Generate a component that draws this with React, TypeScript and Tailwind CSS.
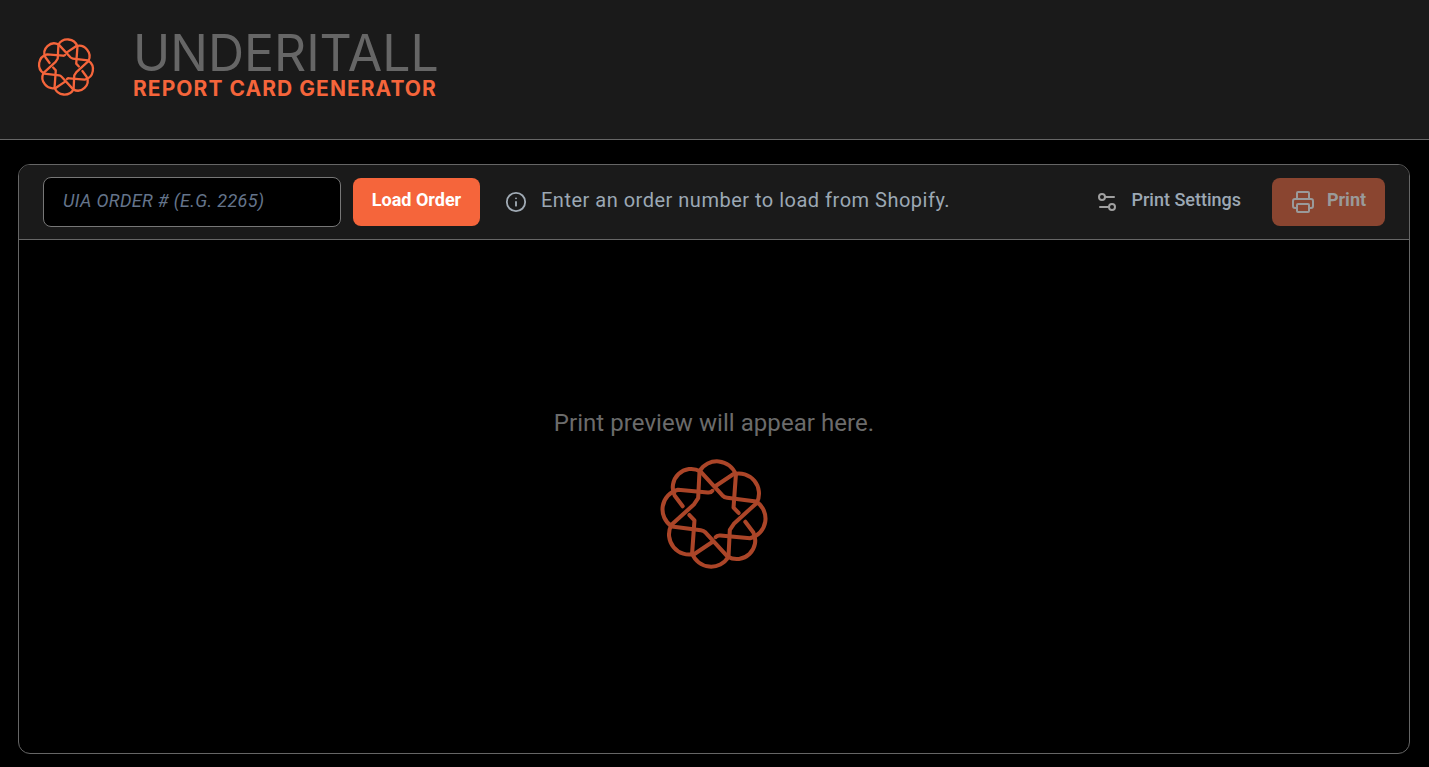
import React from 'react';
import { Info, Printer, Settings2 } from 'lucide-react';

const knotStrands = [
  'M100 170 L76 138 A55 55 0 0 1 152 66 L218 138 Q224 144 232 145 L318 156 A60 60 0 0 1 300 265 L212 257 Q202 256 198 262',
  'M198 110 L250 75 A60 60 0 0 1 320 160 L252 222 L240 240 L236 320 A60 60 0 0 1 128 310 L135 212 L120 196',
];

const KnotLogo = ({ className, strokeWidth }: { className: string; strokeWidth: number }) => (
  <svg viewBox="0 0 386 386" fill="none" className={className} stroke="currentColor" strokeWidth={strokeWidth} strokeLinecap="round" strokeLinejoin="round">
    {knotStrands.map((d, index) => (
      <g key={index}>
        <path d={d} />
        <path d={d} transform="rotate(180 193 193)" />
      </g>
    ))}
  </svg>
);

const App = () => {
  return (
    <div className="h-[767px] flex flex-col bg-black overflow-hidden font-['Roboto',sans-serif]">
      <header className="h-[140px] shrink-0 flex items-center bg-[#1a1a1a] border-b border-[#666] pl-[32px] pb-[7px]">
        <KnotLogo className="mt-[2px] w-[68px] h-[68px] text-[#f5653b]" strokeWidth={13} />
        <div className="ml-[33px] flex flex-col">
          <span className="font-['Inter',sans-serif] font-normal text-[50px] leading-[42px] mb-[4px] text-[#666] tracking-[0px]">UNDERITALL</span>
          <span className="font-['Inter',sans-serif] font-bold text-[21px] leading-[22px] text-[#f5653b] tracking-[1.05px]">REPORT CARD GENERATOR</span>
        </div>
      </header>

      <main className="flex-1 pl-[18px] pr-[19px] pt-6 pb-[13px] flex flex-col min-h-0">
        <div className="flex-1 flex flex-col border border-[#666] rounded-xl overflow-hidden">
          <div className="h-[75px] shrink-0 flex items-center bg-[#1a1a1a] border-b border-[#666] pl-6 pr-6">
            <input
              placeholder="UIA ORDER # (E.G. 2265)"
              className="w-[298px] h-[50px] bg-black border border-[#777] rounded-lg pl-[19px] pr-[19px] pb-1 text-[18px] tracking-[0.35px] italic placeholder:text-[#64748b] outline-none"
            />
            <button className="ml-3 w-[127px] h-[48px] pb-[5px] rounded-lg bg-[#f5653b] text-white font-bold text-[18px]">Load Order</button>
            <Info className="ml-[25px] w-[22px] h-[22px] text-[#a0aab4]" strokeWidth={2} />
            <span className="ml-[14px] mb-1 text-[#9ca8b4] text-[20px] tracking-[0.5px]">Enter an order number to load from Shopify.</span>
            <button className="ml-auto flex items-center text-[#9ca8b4] font-medium text-[18px]">
              <Settings2 className="w-6 h-6 text-[#a0a0a0]" strokeWidth={2} />
              <span className="ml-3 mb-[5px]">Print Settings</span>
            </button>
            <button className="ml-[31px] w-[113px] h-[48px] rounded-lg bg-[#8a4530] flex items-center justify-center text-[#9a9a9a] font-bold text-[18px]">
              <Printer className="w-6 h-6" strokeWidth={2} />
              <span className="ml-[12px] mb-[5px]">Print</span>
            </button>
          </div>

          <div className="flex-1 flex flex-col items-center pt-[169px]">
            <p className="text-[24px] leading-[28px] tracking-[0.06px] text-[#6b6b6b]">Print preview will appear here.</p>
            <KnotLogo className="mt-[12px] w-[130px] h-[130px] text-[#ab4528]" strokeWidth={12} />
          </div>
        </div>
      </main>
    </div>
  );
};

export default App;
